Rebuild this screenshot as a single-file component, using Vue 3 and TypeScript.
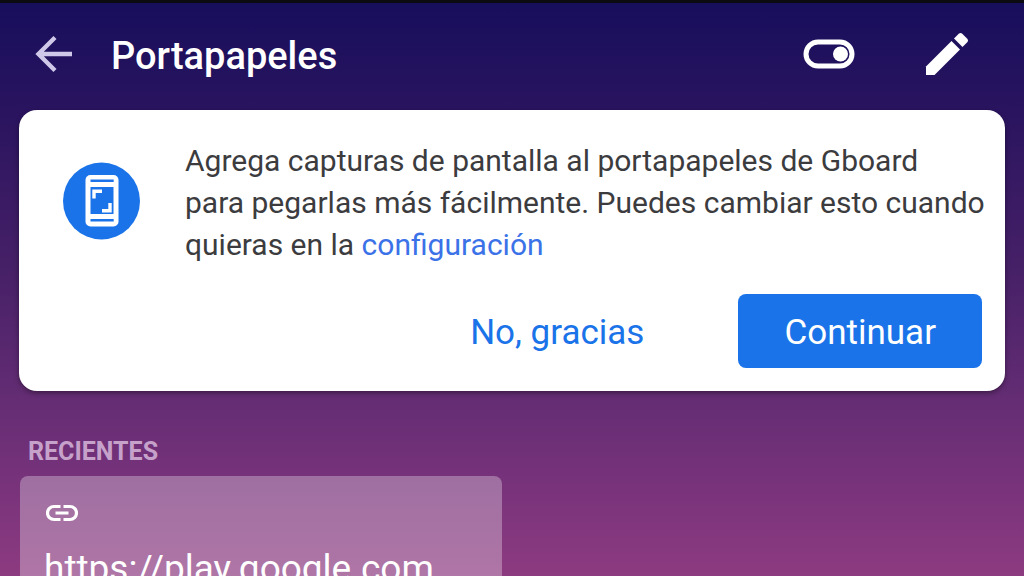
<script setup lang="ts">
import { ref } from 'vue'

const clipboardOn = ref<boolean>(true)
const promptVisible = ref<boolean>(true)
const clips: string[] = ['https://play.google.com']
</script>

<template>
  <main class="panel">
    <header class="bar">
      <button class="icon-btn back" type="button" aria-label="Atrás">
        <svg width="38" height="38" viewBox="0 0 38 38" fill="none" stroke="currentColor" stroke-width="4.4">
          <path d="M37 19H4M20 2.500L3.500 19L20 35.500" />
        </svg>
      </button>
      <h1>Portapapeles</h1>
      <button
        class="icon-btn toggle"
        type="button"
        role="switch"
        aria-label="Portapapeles"
        :aria-checked="clipboardOn"
        @click="clipboardOn = !clipboardOn"
      >
        <svg width="52" height="30" viewBox="0 0 52 30">
          <rect x="3" y="3" width="46" height="24" rx="12" fill="none" stroke="currentColor" stroke-width="5" />
          <circle :cx="clipboardOn ? 37.500 : 14.500" cy="15" r="7.500" fill="currentColor" />
        </svg>
      </button>
      <button class="icon-btn" type="button" aria-label="Editar">
        <svg width="44" height="44" viewBox="0 0 44 44" fill="currentColor">
          <path d="M1 34.500L26.500 9L35 17.500L9.500 43H1Z" />
          <path d="M29 6.500L34 1.500Q35.500 0.300 37 1.500L42.500 7Q43.700 8.500 42.500 10L37.500 15Z" />
        </svg>
      </button>
    </header>

    <section v-if="promptVisible" class="card">
      <div class="message">
        <svg class="badge" width="78" height="78" viewBox="0 0 78 78">
          <circle cx="38.500" cy="39" r="38.500" fill="#1a73e8" />
          <rect x="22.500" y="13" width="33" height="51.500" rx="5" fill="#fff" />
          <path d="M27.500 18.700H50.700M27.500 58.300H50.700" stroke="#1a73e8" stroke-width="2.400" />
          <rect x="27.500" y="25" width="23" height="27" fill="#1a73e8" />
          <path d="M31 36.500V29.300H39M47 41V48.700H39" fill="none" stroke="#fff" stroke-width="3.400" />
        </svg>
        <p>
          Agrega capturas de pantalla al portapapeles de Gboard para&nbsp;pegarlas más fácilmente.
          Puedes cambiar esto cuando quieras en la <a href="#">configuración</a>
        </p>
      </div>
      <div class="actions">
        <button class="action" type="button" @click="promptVisible = false">No, gracias</button>
        <button class="action primary" type="button" @click="promptVisible = false">Continuar</button>
      </div>
    </section>

    <h2>RECIENTES</h2>
    <div class="clips">
      <button v-for="clip in clips" :key="clip" class="clip" type="button">
        <svg width="32" height="18" viewBox="0 0 32 18" fill="none" stroke="currentColor" stroke-width="3.200">
          <path d="M14.500 2.500H8A6.500 6.500 0 0 0 8 15.500H14.500M17.500 2.500H24A6.500 6.500 0 0 1 24 15.500H17.500M9.500 9H22.500" />
        </svg>
        <span>{{ clip }}</span>
      </button>
    </div>
  </main>
</template>

<style>
body {
  margin: 0;
  background: #170e5c;
}
</style>

<style scoped>
.panel {
  box-sizing: border-box;
  height: 100vh;
  overflow: hidden;
  padding: 0 19px;
  border-top: 3px solid #0b0b12;
  background: linear-gradient(#170e5c 0%, #2a145f 19%, #482168 48%, #652d74 70%, #79337b 85%, #8d3b80 100%);
  font-family: Roboto, "Noto Sans", sans-serif;
}

button {
  padding: 0;
  border: 0;
  background: none;
  color: #fff;
  font: inherit;
  cursor: pointer;
}

svg {
  display: block;
}

.bar {
  display: flex;
  align-items: center;
  height: 101px;
  padding: 0 36px 6px 16px;
  color: #fff;
}

.icon-btn {
  flex: none;
}

.back {
  color: #cfc8e8;
}

.toggle {
  margin-right: 70px;
}

h1 {
  flex: 1;
  margin: 4px 0 0 38px;
  font-size: 38px;
  line-height: 44px;
  font-weight: 500;
}

.card {
  padding: 30px 12px 23px 44px;
  border-radius: 18px;
  background: #fff;
  box-shadow: 0 2px 5px rgba(0, 0, 0, 0.4);
}

.message {
  display: flex;
  align-items: flex-start;
  gap: 44px;
}

.badge {
  flex: none;
  margin-top: 22px;
}

p {
  flex: 1;
  margin: 0;
  color: #3c3c3f;
  font-size: 30px;
  line-height: 42px;
}

a {
  color: #3b72e8;
  text-decoration: none;
}

.actions {
  display: flex;
  justify-content: flex-end;
  gap: 48px;
  margin-top: 28px;
  padding-right: 11px;
}

.action {
  padding: 4px 46px 0;
  border-radius: 8px;
  color: #1a73e8;
  font-size: 35px;
  line-height: 70px;
}

.primary {
  background: #1a73e8;
  color: #fff;
}

h2 {
  margin: 45px 0 0 9px;
  color: #c6a2cb;
  font-size: 25px;
  line-height: 32px;
  font-weight: 700;
}

.clips {
  display: grid;
  grid-template-columns: 1fr 1fr;
  gap: 22px;
  margin: 8px 0 0 1px;
}

.clip {
  display: flex;
  flex-direction: column;
  align-items: flex-start;
  gap: 24px;
  padding: 28px 24px 32px;
  border-radius: 8px;
  background: rgba(255, 255, 255, 0.3);
  font-size: 37px;
  line-height: 46px;
}

.clip svg {
  margin-left: 2px;
}
</style>
